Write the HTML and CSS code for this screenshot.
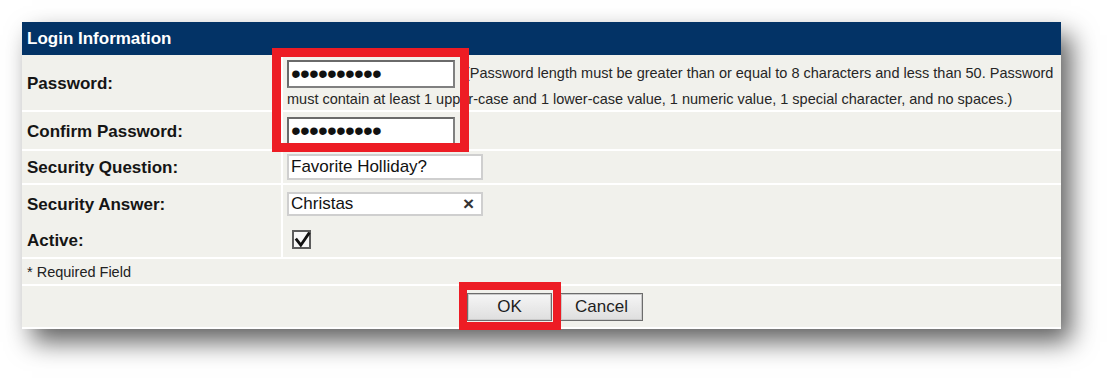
FILE: index.html
```html
<!DOCTYPE html>
<html>
<head>
<meta charset="utf-8">
<title>Login Information</title>
<link rel="stylesheet" href="styles.css">
</head>
<body>
<div class="page">
  <div class="panel">
    <div class="header">Login Information</div>

    <div class="row row-pass">
      <div class="label">Password:</div>
      <div class="value flow"><input class="pw" type="password" value="Password1!"><span class="hint">(Password length must be greater than or equal to 8 characters and less than 50. Password must contain at least 1 upper-case and 1 lower-case value, 1 numeric value, 1 special character, and no spaces.)</span></div>
    </div>

    <div class="row row-confirm">
      <div class="label">Confirm Password:</div>
      <div class="value"><input class="pw" type="password" value="Password1!"></div>
    </div>

    <div class="row row-q">
      <div class="label">Security Question:</div>
      <div class="value"><input class="txt txt-q" type="text" value="Favorite Holliday?"></div>
    </div>

    <div class="row row-a nosep">
      <div class="label">Security Answer:</div>
      <div class="value">
        <div class="field"><input class="bare" type="text" value="Christas"><span class="clear">×</span></div>
      </div>
    </div>

    <div class="row row-active">
      <div class="label">Active:</div>
      <div class="value">
        <span class="check"><svg width="19" height="19" viewBox="0 0 19 19"><rect x="1" y="1" width="17" height="17" fill="#f7f7f7" stroke="#5c5c5c" stroke-width="2"/><path d="M3.8 8.6 L8.8 15.2 L17.4 2.6" fill="none" stroke="#111" stroke-width="2.8" stroke-linejoin="miter"/></svg></span>
      </div>
    </div>

    <div class="req">* Required Field</div>

    <div class="buttons">
      <button class="btn btn-ok" type="button">OK</button>
      <button class="btn btn-cancel" type="button">Cancel</button>
    </div>
  </div>

  <div class="mark mark-pw"></div>
  <div class="mark mark-ok"></div>
</div>
</body>
</html>
```
FILE: styles.css
```css
* { box-sizing: border-box; }

body {
  margin: 0;
  background: #ffffff;
  font-family: "Liberation Sans", Arial, sans-serif;
  color: #161616;
}

.page {
  position: relative;
  padding: 22px 0 0 22px;
  height: 384px;
  overflow: hidden;
}

.panel {
  width: 1039px;
  background: #f1f1ec;
  box-shadow: 10px 13px 24px rgba(0, 0, 0, 0.62);
}

.header {
  height: 33px;
  background: #033366;
  color: #ffffff;
  font-weight: bold;
  font-size: 17px;
  padding-left: 5px;
  display: flex;
  align-items: center;
}

.row {
  display: grid;
  grid-template-columns: 261px 1fr;
  border-bottom: 2px solid #ffffff;
}
.row.nosep { border-bottom: 0; }

.row-pass { height: 57px; }
.row-confirm { height: 39px; }
.row-q { height: 34px; }
.row-a { height: 37px; }
.row-active { height: 37px; }

.label {
  border-right: 2px solid #ffffff;
  display: flex;
  align-items: center;
  padding: 2px 0 0 5px;
  font-weight: bold;
  font-size: 17px;
  color: #151515;
}

.value {
  padding-left: 4px;
  display: flex;
  align-items: center;
}

.value.flow {
  display: block;
  padding-top: 5px;
  font-size: 14.5px;
  line-height: 22px;
  color: #262626;
}

.hint { margin-left: 10px; }

.pw {
  width: 168px;
  height: 28px;
  vertical-align: middle;
  border: 2px solid #808080;
  border-top-color: #6a6a6a;
  border-left-color: #6a6a6a;
  background: #ffffff;
  padding: 0 0 0 2px;
  margin: 0;
  font-family: "Liberation Sans", Arial, sans-serif;
  font-size: 28px;
  letter-spacing: -0.8px;
  color: #111111;
  outline: none;
}

.txt {
  width: 196px;
  height: 26px;
  border: 2px solid #cfcfcf;
  background: #ffffff;
  padding: 0 0 0 2px;
  margin: 0;
  font-family: "Liberation Sans", Arial, sans-serif;
  font-size: 17px;
  color: #111111;
  outline: none;
}

.field {
  width: 196px;
  height: 24px;
  border: 2px solid #cfcfcf;
  background: #ffffff;
  display: flex;
  align-items: center;
  padding: 0 7px 0 2px;
}

.bare {
  flex: 1;
  min-width: 0;
  border: 0;
  padding: 0;
  margin: 0;
  background: transparent;
  font-family: "Liberation Sans", Arial, sans-serif;
  font-size: 17px;
  color: #111111;
  outline: none;
}

.clear {
  font-size: 19px;
  font-weight: bold;
  color: #333333;
  line-height: 1;
}

.check {
  display: block;
  width: 19px;
  height: 19px;
  margin-left: 5px;
}
.check svg { display: block; }

.req {
  height: 27px;
  border-bottom: 2px solid #ffffff;
  padding-left: 5px;
  display: flex;
  align-items: center;
  font-size: 14.5px;
  color: #222222;
}

.buttons {
  height: 43px;
  border-bottom: 2px solid #ffffff;
  display: flex;
  align-items: center;
  justify-content: center;
  gap: 8px;
  padding-left: 27px;
}

.btn {
  height: 28px;
  margin: 0;
  padding: 0;
  border: 1px solid #6c6c6c;
  box-shadow: inset 0 0 0 1px #c9c9c9;
  background: linear-gradient(#f6f6f6, #dedede);
  font-family: "Liberation Sans", Arial, sans-serif;
  font-size: 17px;
  color: #1e1e1e;
}
.btn-ok { width: 85px; }
.btn-cancel { width: 83px; }

.mark {
  position: absolute;
  border: 9px solid #ed1c24;
}
.mark-pw {
  left: 272px;
  top: 48px;
  width: 197px;
  height: 104px;
}
.mark-ok {
  left: 459px;
  top: 282px;
  width: 102px;
  height: 48px;
  border-width: 8px;
}
```
